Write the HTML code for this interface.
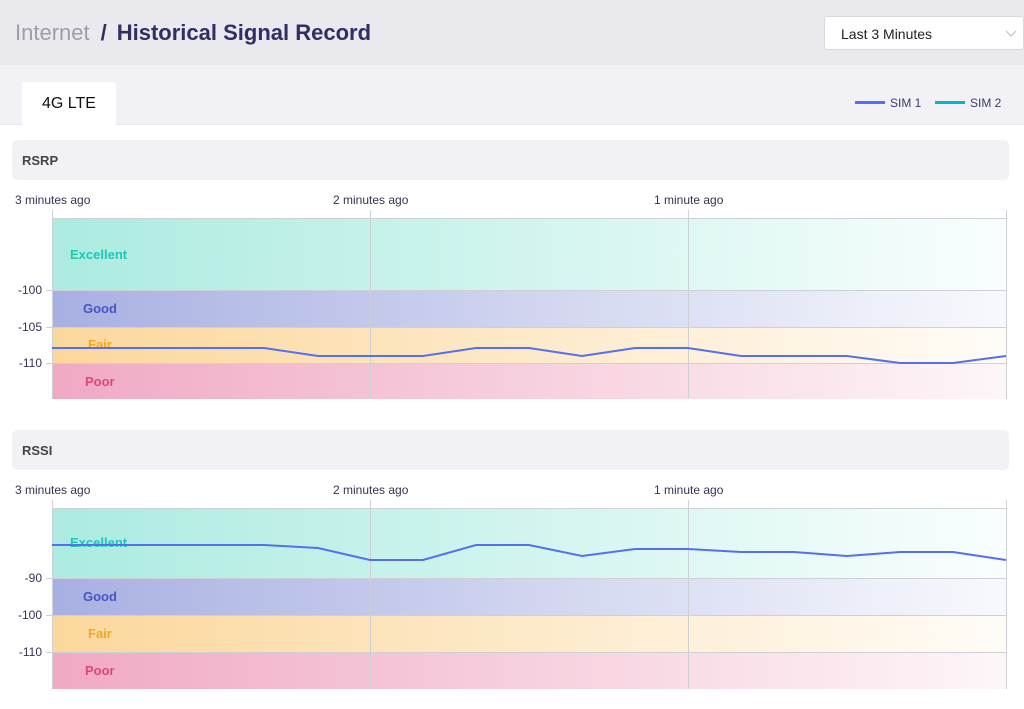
<!DOCTYPE html>
<html><head><meta charset="utf-8"><style>
*{margin:0;padding:0;box-sizing:border-box}
body{width:1024px;height:709px;background:#fff;font-family:"Liberation Sans",Arial,sans-serif;position:relative;overflow:hidden}
.hdr{position:absolute;left:0;top:0;width:1024px;height:65px;background:#e9e9ee;box-shadow:0 2px 4px rgba(0,0,0,.08)}
.title{position:absolute;left:15px;top:20px;font-size:22px;color:#2f2f66;font-weight:bold;white-space:nowrap}
.title span{color:#9d9db0;font-weight:normal}
.title b{display:inline-block;margin:0 10px 0 11px}
.sel{position:absolute;left:824px;top:16px;width:200px;height:34px;background:#fff;border:1px solid #d8d8de;border-radius:3px;font-size:14px;color:#222;padding:9px 0 0 16px}
.tabs{position:absolute;left:0;top:65px;width:1024px;height:60px;background:#f2f2f6;border-bottom:1px solid #e6e6ec}
.tab{position:absolute;left:22px;top:17px;width:94px;height:44px;background:#fff;border-radius:3px 3px 0 0;font-size:16px;color:#111;text-align:center;padding-top:13px}
.leg{position:absolute;top:31px;font-size:12px;color:#3b3b66}
.leg i{display:inline-block;width:30px;height:3px;vertical-align:middle;margin-right:5px;margin-top:-2px}
.sec{position:absolute;left:12px;width:997px;height:40px;background:#f2f2f6;border-radius:5px;font-size:13px;font-weight:bold;color:#444;padding:13px 0 0 10px}
</style></head><body>
<div class="hdr"><div class="title"><span>Internet</span><b>/</b>Historical Signal Record</div>
<div class="sel">Last 3 Minutes<svg style="position:absolute;right:6px;top:13px" width="12" height="8"><path d="M1 1 L6 6 L11 1" stroke="#bbb" fill="none"/></svg></div></div>
<div class="tabs"><div class="tab">4G LTE</div>
<div class="leg" style="left:855px"><i style="background:#5470f0"></i>SIM 1</div>
<div class="leg" style="left:935px"><i style="background:#00b7d0"></i>SIM 2</div></div>
<div class="sec" style="top:140px">RSRP</div>
<div class="sec" style="top:430px">RSSI</div>
<svg style="position:absolute;left:0;top:0" width="1024" height="709" font-family="Liberation Sans,Arial,sans-serif">
<defs>
<linearGradient id="ge"><stop offset="0" stop-color="#abebe0"/><stop offset="1" stop-color="#f9fefe"/></linearGradient>
<linearGradient id="gg"><stop offset="0" stop-color="#a8b0e2"/><stop offset="1" stop-color="#f8f9fd"/></linearGradient>
<linearGradient id="gf"><stop offset="0" stop-color="#fbd79b"/><stop offset="1" stop-color="#fffcf7"/></linearGradient>
<linearGradient id="gp"><stop offset="0" stop-color="#f0a9c4"/><stop offset="1" stop-color="#fdf6f8"/></linearGradient>
</defs>
<g font-size="12" fill="#333355">
<text x="15" y="204">3 minutes ago</text><text x="333" y="204">2 minutes ago</text><text x="654" y="204">1 minute ago</text>
<text x="15" y="494">3 minutes ago</text><text x="333" y="494">2 minutes ago</text><text x="654" y="494">1 minute ago</text>
<text x="42" y="294" text-anchor="end">-100</text><text x="42" y="331" text-anchor="end">-105</text><text x="42" y="367" text-anchor="end">-110</text>
<text x="42" y="582" text-anchor="end">-90</text><text x="42" y="619" text-anchor="end">-100</text><text x="42" y="656" text-anchor="end">-110</text>
</g>
<rect x="52" y="218" width="954" height="72" fill="url(#ge)"/>
<rect x="52" y="290" width="954" height="37" fill="url(#gg)"/>
<rect x="52" y="327" width="954" height="36" fill="url(#gf)"/>
<rect x="52" y="363" width="954" height="36" fill="url(#gp)"/>
<g stroke="#cfcfd6" stroke-width="1">
<line x1="52" y1="218.5" x2="1006" y2="218.5"/><line x1="46" y1="290.5" x2="1006" y2="290.5"/><line x1="46" y1="327.5" x2="1006" y2="327.5"/><line x1="46" y1="363.5" x2="1006" y2="363.5"/>
<line x1="52.5" y1="210" x2="52.5" y2="399"/><line x1="370.5" y1="210" x2="370.5" y2="399"/><line x1="688.5" y1="210" x2="688.5" y2="399"/><line x1="1006.5" y1="210" x2="1006.5" y2="399"/>
</g>
<g font-size="13" font-weight="bold">
<text x="70" y="259" fill="#1ec8b0">Excellent</text><text x="83" y="313" fill="#4656c4">Good</text><text x="88" y="349" fill="#f5a623">Fair</text><text x="85" y="386" fill="#e0457a">Poor</text>
</g>
<polyline fill="none" stroke="#5470f0" stroke-width="2" points="52,348 264,348 318,356 423,356 476,348 529,348 582,356 635,348 688,348 741,356 847,356 900,363 953,363 1006,356"/>
<rect x="52" y="508" width="954" height="70" fill="url(#ge)"/>
<rect x="52" y="578" width="954" height="37" fill="url(#gg)"/>
<rect x="52" y="615" width="954" height="37" fill="url(#gf)"/>
<rect x="52" y="652" width="954" height="37" fill="url(#gp)"/>
<g stroke="#cfcfd6" stroke-width="1">
<line x1="52" y1="508.5" x2="1006" y2="508.5"/><line x1="46" y1="578.5" x2="1006" y2="578.5"/><line x1="46" y1="615.5" x2="1006" y2="615.5"/><line x1="46" y1="652.5" x2="1006" y2="652.5"/>
<line x1="52.5" y1="500" x2="52.5" y2="689"/><line x1="370.5" y1="500" x2="370.5" y2="689"/><line x1="688.5" y1="500" x2="688.5" y2="689"/><line x1="1006.5" y1="500" x2="1006.5" y2="689"/>
</g>
<g font-size="13" font-weight="bold">
<text x="70" y="547" fill="#1ec8b0">Excellent</text><text x="83" y="601" fill="#4656c4">Good</text><text x="88" y="638" fill="#f5a623">Fair</text><text x="85" y="675" fill="#e0457a">Poor</text>
</g>
<polyline fill="none" stroke="#5470f0" stroke-width="2" points="52,545 264,545 318,548 370,560 423,560 476,545 529,545 582,556 635,549 688,549 741,552 794,552 847,556 900,552 953,552 1006,560"/>
</svg>
</body></html>
